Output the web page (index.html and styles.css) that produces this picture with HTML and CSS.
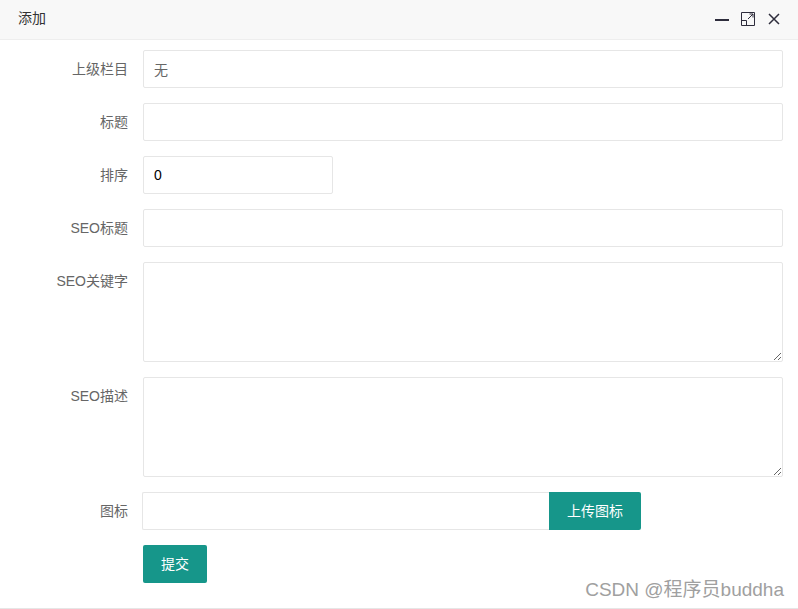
FILE: index.html
```html
<!DOCTYPE html>
<html lang="en">
<head>
  <meta charset="UTF-8">
  <meta name="viewport" content="width=device-width, initial-scale=1.0">
  <title>添加</title>
  <link rel="stylesheet" href="styles.css">
</head>
<body>

  <header class="dialog-title">
    <span class="title-text">添加</span>
    <div class="dialog-tools">
      <svg class="tool-icon" viewBox="0 0 14 14"><path d="M0 8h14" stroke-width="2"/></svg>
      <svg class="tool-icon" viewBox="0 0 14 14"><path d="M.5 .5h13v13H.5zM.5 8.500h5v5M7 7l5-5M8.500 2h3.500v3.500"/></svg>
      <svg class="tool-icon" viewBox="0 0 14 14"><path d="M2 2l10 10M12 2L2 12" stroke-width="1.500"/></svg>
    </div>
  </header>

  <form class="edit-form">
    <div class="form-row">
      <label class="form-label">上级栏目</label>
      <input class="form-input input-muted" type="text" value="无">
    </div>
    <div class="form-row">
      <label class="form-label">标题</label>
      <input class="form-input" type="text">
    </div>
    <div class="form-row">
      <label class="form-label">排序</label>
      <input class="form-input input-short" type="text" value="0">
    </div>
    <div class="form-row">
      <label class="form-label">SEO标题</label>
      <input class="form-input" type="text">
    </div>
    <div class="form-row">
      <label class="form-label">SEO关键字</label>
      <textarea class="form-input form-area"></textarea>
    </div>
    <div class="form-row">
      <label class="form-label">SEO描述</label>
      <textarea class="form-input form-area"></textarea>
    </div>
    <div class="form-row upload-row">
      <label class="form-label">图标</label>
      <input class="form-input upload-input" type="text">
      <button class="action-button upload-button" type="button">上传图标</button>
    </div>
    <div class="form-row">
      <span class="form-label"></span>
      <button class="action-button" type="button">提交</button>
    </div>
  </form>

  <div class="watermark">CSDN @程序员buddha</div>

</body>
</html>
```

FILE: styles.css
```css
* {
  box-sizing: border-box;
}

body {
  margin: 0;
  height: 609px;
  overflow: hidden;
  position: relative;
  background-color: #fff;
  color: #666;
  font-family: "Liberation Sans", "Noto Sans CJK SC", sans-serif;
  font-size: 14px;
  border-bottom: 1px solid #e6e6e6;
}

.dialog-title {
  height: 40px;
  padding: 0 18px;
  display: flex;
  align-items: center;
  justify-content: space-between;
  background-color: #f8f8f8;
  border-bottom: 1px solid #eee;
  color: #333;
  font-size: 14px;
}

.title-text {
  line-height: 20px;
  margin-top: -3px;
}

.dialog-tools {
  display: flex;
  gap: 12px;
  margin-right: -1px;
  margin-top: -1px;
}

.tool-icon {
  width: 14px;
  height: 14px;
  fill: none;
  stroke: #2e2d3c;
  stroke-width: 1;
}

.edit-form {
  padding: 10px 15px 0 0;
  display: flex;
  flex-direction: column;
  gap: 15px;
}

.form-row {
  display: flex;
}

.form-label {
  flex: none;
  width: 143px;
  padding: 9px 15px 0 0;
  line-height: 20px;
  text-align: right;
  font-size: 14px;
}

.form-input {
  flex: 1;
  height: 38px;
  padding: 0 10px;
  background-color: #fff;
  border: 1px solid #e6e6e6;
  border-radius: 2px;
  color: #000;
  font-family: inherit;
  font-size: 14px;
  outline: none;
}

.input-muted {
  color: #666;
}

.input-short {
  flex: none;
  width: 190px;
}

.form-area {
  height: 100px;
  resize: vertical;
}

.upload-row .form-label {
  width: 142px;
  padding-right: 14px;
}

.upload-input {
  flex: none;
  width: 407px;
  border-right: none;
  border-radius: 2px 0 0 2px;
}

.action-button {
  height: 38px;
  padding: 0 18px 2px;
  background-color: #16968a;
  border: none;
  border-radius: 2px;
  color: #fff;
  font-family: inherit;
  font-size: 14px;
}

.upload-button {
  border-radius: 0 2px 2px 0;
}

.watermark {
  position: absolute;
  right: 14px;
  bottom: 6px;
  color: #a0a0a0;
  font-size: 19px;
  line-height: 24px;
  white-space: nowrap;
}
```
